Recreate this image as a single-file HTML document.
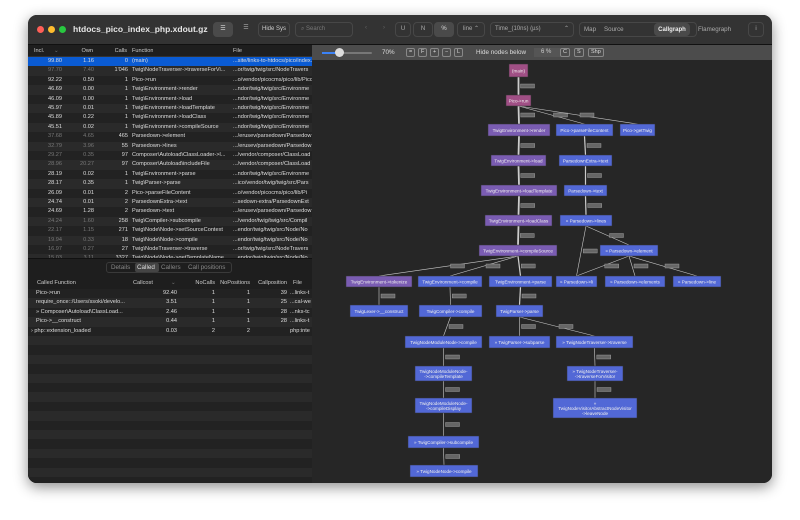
<!DOCTYPE html>
<html><head><meta charset="utf-8"><style>
*{margin:0;padding:0;box-sizing:border-box}
body{width:800px;height:520px;background:#fff;font-family:"Liberation Sans",sans-serif;position:relative;overflow:hidden}
.win{position:absolute;left:28px;top:15px;width:744px;height:468px;border-radius:9px;background:#1e1e1e;overflow:hidden;box-shadow:0 4px 14px rgba(0,0,0,.45)}
.tb{position:absolute;left:0;top:0;width:744px;height:30px;background:#333;border-bottom:1px solid #111}
.dot{position:absolute;top:11px;width:7px;height:7px;border-radius:50%}
.t{position:absolute;color:#ddd;white-space:nowrap}
.btn{position:absolute;top:7px;height:15px;border:1px solid #474747;border-radius:4px;color:#aaa;font-size:6px;line-height:13px;text-align:center}
.left{position:absolute;left:0;top:30px;width:284px;height:438px;background:#1e1e1e}
.row{position:absolute;left:0;width:284px;height:9.4px;font-size:5.6px;line-height:9.4px;color:#ddd}
.row span{position:absolute;white-space:nowrap;overflow:hidden}
.dim .c1,.dim .c2{color:#777}
.gp{position:absolute;left:284px;top:30px;width:460px;height:438px;background:#262626}
</style></head><body>
<div class="win">
<div class="tb">
<div class="dot" style="left:9px;background:#ff5f57"></div>
<div class="dot" style="left:20px;background:#febc2e"></div>
<div class="dot" style="left:31px;background:#28c840"></div>
<div class="t" style="left:45px;top:9px;font-size:8.5px;font-weight:bold;color:#e6e6e6">htdocs_pico_index_php.xdout.gz</div>
<div class="btn" style="left:185px;width:20px;background:#4a4a4a;border-color:#4a4a4a;color:#ddd">☰</div>
<div class="btn" style="left:208px;width:20px;border:none;color:#aaa">☰</div>
<div class="btn" style="left:230px;width:32px;color:#ccc">Hide Sys</div>
<div class="btn" style="left:267px;width:58px;text-align:left;padding-left:5px;color:#777">⌕ Search</div>
<div class="btn" style="left:330px;width:16px;border:none;color:#666">‹</div>
<div class="btn" style="left:348px;width:16px;border:none;color:#666">›</div>
<div class="btn" style="left:367px;width:16px">U</div>
<div class="btn" style="left:385px;width:20px">N</div>
<div class="btn" style="left:406px;width:20px;background:#4a4a4a;border-color:#4a4a4a;color:#ddd">%</div>
<div class="btn" style="left:429px;width:28px">line ⌃</div>
<div class="btn" style="left:462px;width:84px;text-align:left;padding-left:4px">Time_(10ns) (µs)<span style="position:absolute;right:4px">⌃</span></div>
<div class="btn" style="left:551px;width:118px"></div>
<div class="t" style="left:556px;top:11px;font-size:6.2px;color:#aaa">Map</div>
<div class="t" style="left:576px;top:11px;font-size:6.2px;color:#aaa">Source</div>
<div class="btn" style="left:626px;width:36px;background:#4a4a4a;border-color:#4a4a4a;color:#eee;font-weight:bold;top:8px;height:13px;line-height:12px">Callgraph</div>
<div class="t" style="left:670px;top:11px;font-size:6.2px;color:#aaa">Flamegraph</div>
<div class="btn" style="left:720px;width:16px">i</div>
</div>

<div class="left">
<div class="row" style="top:0;height:12px;line-height:12px;background:#1e1e1e;color:#ccc;border-bottom:1px solid #333">
<span style="left:6px">Incl.</span><span style="left:26px;color:#777">⌄</span><span style="right:219px">Own</span><span style="right:185px">Calls</span><span style="left:104px">Function</span><span style="left:205px">File</span></div>
<div id="rows"></div>
</div>
<div style="position:absolute;left:0;top:243px;width:284px;height:225px;background:#1e1e1e;border-top:1px solid #111">
<div style="position:absolute;left:78px;top:3px;width:126px;height:11px;border:1px solid #3a3a3a;border-radius:3px"></div>
<div class="t" style="left:83px;top:5px;font-size:6.3px;color:#888">Details</div>
<div style="position:absolute;left:107px;top:4px;width:24px;height:9px;background:#444;border-radius:2px"></div>
<div class="t" style="left:109px;top:5px;font-size:6.3px;color:#ddd">Called</div>
<div class="t" style="left:133px;top:5px;font-size:6.3px;color:#888">Callers</div>
<div class="t" style="left:160px;top:5px;font-size:6.3px;color:#888">Call positions</div>
<div id="brows"></div>
</div>

<div class="gp">
<div style="position:absolute;left:0;top:0;width:460px;height:15px;background:#4c4c4c"></div>
<div style="position:absolute;left:10px;top:7px;width:50px;height:2px;background:#777;border-radius:1px"></div>
<div style="position:absolute;left:10px;top:7px;width:20px;height:2px;background:#3b82f6"></div>
<div style="position:absolute;left:23px;top:3px;width:9px;height:9px;border-radius:50%;background:#ddd"></div>
<div class="t" style="left:70px;top:4px;font-size:6.3px;color:#ddd">70%</div>
<div id="gb"></div>
<div class="t" style="left:164px;top:4px;font-size:6.3px;color:#ddd">Hide nodes below</div>
<div style="position:absolute;left:222px;top:3px;width:26px;height:9px;background:#555"></div>
<div class="t" style="left:229px;top:4px;font-size:6px;color:#ccc">6 %</div>
<svg id="g" width="460" height="438" style="position:absolute;left:0;top:0" font-family="Liberation Sans" ></svg>
</div>
</div>
<script>
var R=[["99.80","1.16","0","(main)","...site/links-to-htdocs/pico/index.php",0,1],
["97.70","7.40","1'046","Twig\\NodeTraverser->traverseForVi...","...or/twig/twig/src/NodeTravers",1],
["92.22","0.50","1","Pico->run","...o/vendor/picocms/pico/lib/Pico",0],
["46.69","0.00","1","Twig\\Environment->render","...ndor/twig/twig/src/Environme",0],
["46.09","0.00","1","Twig\\Environment->load","...ndor/twig/twig/src/Environme",0],
["45.97","0.01","1","Twig\\Environment->loadTemplate","...ndor/twig/twig/src/Environme",0],
["45.89","0.22","1","Twig\\Environment->loadClass","...ndor/twig/twig/src/Environme",0],
["45.51","0.02","1","Twig\\Environment->compileSource","...ndor/twig/twig/src/Environme",0],
["37.68","4.65","465","Parsedown->element",".../erusev/parsedown/Parsedow",1],
["32.79","3.96","55","Parsedown->lines",".../erusev/parsedown/Parsedow",1],
["29.27","0.35","97","Composer\\Autoload\\ClassLoader->l...",".../vendor/composer/ClassLoad",1],
["28.96","20.27","97","Composer\\Autoload\\includeFile",".../vendor/composer/ClassLoad",1],
["28.19","0.02","1","Twig\\Environment->parse","...ndor/twig/twig/src/Environme",0],
["28.17","0.35","1","Twig\\Parser->parse","...ico/vendor/twig/twig/src/Pars",0],
["26.09","0.01","2","Pico->parseFileContent","...o/vendor/picocms/pico/lib/Pi",0],
["24.74","0.01","2","ParsedownExtra->text","...sedown-extra/ParsedownExt",0],
["24.69","1.28","2","Parsedown->text",".../erusev/parsedown/Parsedow",0],
["24.24","1.60","258","Twig\\Compiler->subcompile",".../vendor/twig/twig/src/Compil",1],
["22.17","1.15","271","Twig\\Node\\Node->setSourceContext","...endor/twig/twig/src/Node/No",1],
["19.94","0.33","18","Twig\\Node\\Node->compile","...endor/twig/twig/src/Node/No",1],
["16.97","0.27","27","Twig\\NodeTraverser->traverse","...or/twig/twig/src/NodeTravers",1],
["15.03","3.11","3327","Twig\\Node\\Node->getTemplateName","...endor/twig/twig/src/Node/No",1]];
var h="";R.forEach(function(r,i){var bg=r[6]?"#0a5bd3":(i%2?"#2a2a2a":"#222");
h+='<div class="row'+(r[5]?' dim':'')+'" style="top:'+(12+i*9.4)+'px;background:'+bg+'"><span class="c1" style="right:250px">'+r[0]+'</span><span class="c2" style="right:218px">'+r[1]+'</span><span style="right:184px">'+r[2]+'</span><span style="left:104px;width:98px">'+r[3]+'</span><span style="left:205px;width:79px">'+r[4]+'</span></div>'});
document.getElementById("rows").innerHTML=h;
var B=[["Pico->run","92.40","1","1","39","...links-t"],["require_once::/Users/ssoki/develo...","3.51","1","1","25","...cal-we"],["» Composer\\Autoload\\ClassLoad...","2.46","1","1","28","...nks-tc"],["Pico->__construct","0.44","1","1","28","...links-t"],["› php::extension_loaded","0.03","2","2","","php:inte"]];
h='<div class="row" style="top:18px;height:12px;line-height:12px;color:#ccc;background:#1e1e1e"><span style="left:9px">Called Function</span><span style="left:105px">Callcost</span><span style="left:143px;color:#777">⌄</span><span style="right:97px">NoCalls</span><span style="right:62px">NoPositions</span><span style="right:25px">Callposition</span><span style="left:265px">File</span></div>';
for(var i=0;i<22;i++){var b=B[i]||["","","","","",""];h+='<div class="row" style="top:'+(30+i*9.4)+'px;background:'+(i%2?"#2a2a2a":"#222")+'"><span style="left:'+(b[0][0]=="›"?3:8)+'px">'+b[0]+'</span><span style="right:135px">'+b[1]+'</span><span style="right:97px">'+b[2]+'</span><span style="right:62px">'+b[3]+'</span><span style="right:25px">'+b[4]+'</span><span style="left:262px;width:22px">'+b[5]+'</span></div>'}
document.getElementById("brows").innerHTML=h;
var gb="",bs=[["=",94],["F",106],["+",118],["−",130],["L",142],["C",248],["S",262],["Shp",276]];
bs.forEach(function(b){gb+='<div class="t" style="left:'+b[1]+'px;top:3px;height:9px;min-width:9px;padding:0 2px;border:1px solid #888;border-radius:2px;font-size:5.5px;line-height:7px;text-align:center;color:#ddd">'+b[0]+'</div>'});
document.getElementById("gb").innerHTML=gb;
var O=312,T=45,M="#a04f85",P="#7a5cb2",U="#5268d6";
var N=[["(main)",509,64,528,77,M],["Pico->run",506,95,531,106,M],
["TwigEnvironment->render",488,124,550,136,P],["Pico->parseFileContent",556,124,613,136,U],["Pico->getTwig",620,124,655,136,U],
["TwigEnvironment->load",491,155,546,166,P],["ParsedownExtra->text",559,155,612,166,U],
["TwigEnvironment->loadTemplate",481,185,557,196,P],["Parsedown->text",564,185,607,196,U],
["TwigEnvironment->loadClass",485,215,552,226,P],["» Parsedown->lines",560,215,612,226,U],
["TwigEnvironment->compileSource",479,245,557,256,P],["» Parsedown->element",600,245,658,256,U],
["TwigEnvironment->tokenize",346,276,412,287,P],["TwigEnvironment->compile",418,276,482,287,U],["TwigEnvironment->parse",489,276,552,287,U],
["» Parsedown->li",556,276,597,287,U],["» Parsedown->elements",605,276,665,287,U],["» Parsedown->line",673,276,721,287,U],
["TwigLexer->__construct",350,305,408,317,U],["TwigCompiler->compile",419,305,482,317,U],["TwigParser->parse",496,305,543,317,U],
["TwigNodeModuleNode->compile",405,336,482,348,U],["» TwigParser->subparse",489,336,550,348,U],["» TwigNodeTraverser->traverse",556,336,633,348,U],
["TwigNodeModuleNode-|->compileTemplate",415,366,472,381,U],["» TwigNodeTraverser-|->traverseForVisitor",567,366,623,381,U],
["TwigNodeModuleNode-|->compileDisplay",415,398,472,413,U],["»|TwigNodeVisitorAbstractNodeVisitor|->leaveNode",553,398,637,418,U],
["» TwigCompiler->subcompile",408,436,479,448,U],["» TwigNodeNode->compile",410,465,478,477,U]];
function c(n){return[(n[1]+n[3])/2-O,(n[2]+n[4])/2-T]}
var E=[[0,1,3],[1,2,3],[1,3,1],[1,4,1],[2,5,3],[3,6,2],[5,7,3],[6,8,2],[7,9,3],[8,10,2],[9,11,3],[10,12,1],[11,13,1],[11,14,1],[11,15,2],[12,16,1],[12,17,1],[12,18,1],[16,10,1],[13,19,1],[14,20,1],[15,21,2],[20,22,1],[21,23,1],[21,24,1],[22,25,1],[24,26,1],[25,27,1],[26,28,1],[27,29,1],[29,30,1]];
var s='';
E.forEach(function(e){var a=N[e[0]],b=N[e[1]],p=c(a),q=c(b);var y1=a[4]-T,y2=b[2]-T;if(e[0]==16){y1=a[2]-T;y2=b[4]-T}
s+='<line x1="'+p[0]+'" y1="'+y1+'" x2="'+q[0]+'" y2="'+y2+'" stroke="#ccc" stroke-width="'+(e[2]*0.6)+'"/>';
var mx=(p[0]+q[0])/2+2,my=(y1+y2)/2;s+='<rect x="'+mx+'" y="'+(my-2)+'" width="14" height="4" fill="#666" stroke="#aaa" stroke-width=".4"/>'});
N.forEach(function(n){var x=n[1]-O,y=n[2]-T,w=n[3]-n[1],hh=n[4]-n[2];s+='<rect x="'+x+'" y="'+y+'" width="'+w+'" height="'+hh+'" fill="'+n[5]+'" stroke="#333" stroke-width=".5"/>';
var L=n[0].split("|");L.forEach(function(l,k){s+='<text x="'+(x+w/2)+'" y="'+(y+hh/2+1.8+(k-(L.length-1)/2)*5)+'" font-size="4.6" fill="#eee" text-anchor="middle">'+l.replace(/>/g,"&gt;")+'</text>'})});
document.getElementById("g").innerHTML=s;
</script>
</body></html>
